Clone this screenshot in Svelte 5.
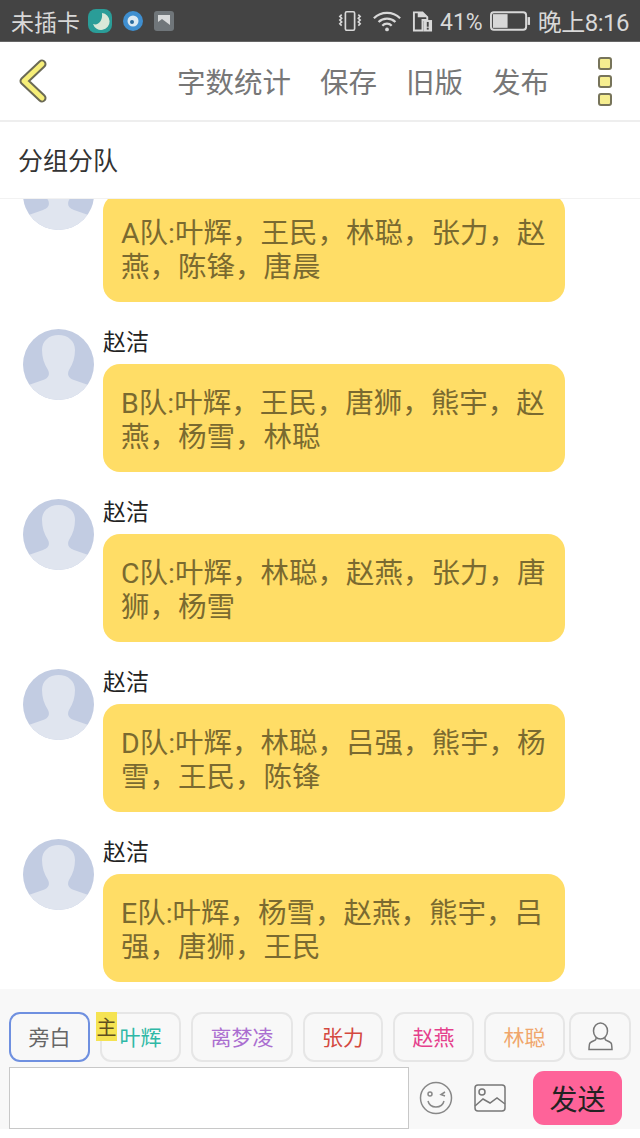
<script>
  const messages = [
    '叶辉，王民，林聪，张力，赵燕，陈锋，唐晨',
    '叶辉，王民，唐狮，熊宇，赵燕，杨雪，林聪',
    '叶辉，林聪，赵燕，张力，唐狮，杨雪',
    '叶辉，林聪，吕强，熊宇，杨雪，王民，陈锋',
    '叶辉，杨雪，赵燕，熊宇，吕强，唐狮，王民'
  ].map((t, i) => 'ABCDE'[i] + '队:' + t);
  const roles = [
    { name: '叶辉', color: '#2fb8a6', w: 81, main: true },
    { name: '离梦凌', color: '#ab6fd0', w: 102 },
    { name: '张力', color: '#d4493f', w: 80 },
    { name: '赵燕', color: '#e5408c', w: 81 },
    { name: '林聪', color: '#f0a66c', w: 81 }
  ];
</script>

<div class="page">
  <header class="status">
    <div class="st-left">
      <span>未插卡</span>
      <svg class="ico" width="24" height="24" viewBox="0 0 24 24"><rect width="24" height="24" rx="8" fill="#2a9d98"/><path d="M14 4a8.500 8.500 0 1 1-9 11c5 2 10-3 9-11z" fill="#d8e8d8"/></svg>
      <svg class="ico" width="22" height="22" viewBox="0 0 22 22"><circle cx="11" cy="11" r="10" fill="#3f8fd0"/><circle cx="11" cy="11" r="5.500" fill="#dbe9f2"/><circle cx="10" cy="12" r="2" fill="#2a6a9c"/></svg>
      <svg class="ico" width="20" height="20" viewBox="0 0 20 20"><rect width="20" height="20" rx="3" fill="#70767a"/><rect x="4" y="4" width="12" height="11" fill="#d8dadb"/><path d="M4 11l4-3 8 6v1H4z" fill="#70767a"/></svg>
    </div>
    <div class="st-right">
      <svg class="vib" width="24" height="24" viewBox="0 0 26 24" fill="none" stroke="#d8d8d8" stroke-width="1.800"><rect x="8" y="2" width="10" height="20" rx="1.500"/><path d="M4 5l-2 2 2 2-2 2 2 2-2 2 2 2M22 5l2 2-2 2 2 2-2 2 2 2-2 2"/></svg>
      <svg class="wifi" width="30" height="24" viewBox="0 0 32 24" fill="none" stroke="#d8d8d8" stroke-width="2.400"><path d="M2 9a20 20 0 0 1 28 0M7 13a13 13 0 0 1 18 0M11 17a7 7 0 0 1 10 0"/><circle cx="16" cy="21" r="2" fill="#d8d8d8" stroke="none"/></svg>
      <svg class="sim" width="21" height="24" viewBox="0 0 22 24"><path d="M2 3h9l5 5v3h-5v11H2z" fill="none" stroke="#d8d8d8" stroke-width="2"/><path d="M6 3h5l5 5H6z" fill="#d8d8d8"/><rect x="12" y="11" width="9" height="12" fill="#d8d8d8"/><rect x="15.500" y="13" width="2" height="5" fill="#444"/><rect x="15.500" y="19" width="2" height="2" fill="#444"/></svg>
      <span class="pct">41%</span>
      <svg class="batt" width="41" height="24" viewBox="0 0 42 24"><rect x="1" y="3" width="36" height="18" rx="3" fill="none" stroke="#d8d8d8" stroke-width="2"/><rect x="3" y="5" width="15" height="14" fill="#d8d8d8"/><rect x="38.500" y="8" width="2.500" height="8" fill="#d8d8d8"/></svg>
      <span class="time">晚上8:16</span>
    </div>
  </header>

  <nav class="toolbar">
    <svg class="back" width="32" height="46" viewBox="0 0 32 46"><path d="M25 6L7 23l18 17" fill="none" stroke="#6b6a55" stroke-width="9" stroke-linecap="round" stroke-linejoin="round"/><path d="M25 6L7 23l18 17" fill="none" stroke="#f6ee78" stroke-width="5" stroke-linecap="round" stroke-linejoin="round"/></svg>
    <div class="actions">
      <span>字数统计</span><span>保存</span><span>旧版</span><span>发布</span>
    </div>
    <div class="dots"><i></i><i></i><i></i></div>
  </nav>

  <div class="title">分组分队</div>

  <main class="chat">
    <div class="list">
      {#each messages as text, i}
        <article class="msg">
          <svg class="avatar" viewBox="0 0 71 71">
            <defs><clipPath id="ac"><circle cx="35.500" cy="35.500" r="35.500"/></clipPath></defs>
            <g clip-path="url(#ac)">
              <rect width="71" height="71" fill="#c2cce2"/>
              <path d="M0 71V58l20-7c6-2 7-6 5-10-4-6-6-13-6-20 0-9 7-15 16.500-15S52 12 52 21c0 7-2 14-6 20-2 4-1 8 5 10l20 7v13z" fill="#e0e5ef"/>
            </g>
          </svg>
          <div class="body">
            <div class="name">{i ? '赵洁' : ''}</div>
            <div class="bubble">{text}</div>
          </div>
        </article>
      {/each}
    </div>
  </main>

  <footer class="composer">
    <div class="roles">
      <button class="role narrator">旁白</button>
      {#each roles as r}
        <button class="role" style="color:{r.color};width:{r.w}px">
          {#if r.main}<span class="main-tag">主</span>{/if}{r.name}
        </button>
      {/each}
      <button class="role user" aria-label="用户">
        <svg width="25" height="29" viewBox="0 0 25 29" fill="none" stroke="#777" stroke-width="1.500"><ellipse cx="12.500" cy="9" rx="7" ry="8"/><path d="M8 15.500v1.500c0 2-6 2-6.500 5-.3 2-.5 4-.5 5.500h23c0-1.500-.2-3.500-.5-5.500-.5-3-6.500-3-6.500-5v-1.500"/></svg>
      </button>
    </div>
    <div class="input-row">
      <div class="input"></div>
      <svg class="smile" width="34" height="34" viewBox="0 0 34 34" fill="none" stroke="#888" stroke-width="1.500"><circle cx="17" cy="17" r="15.500"/><circle cx="11" cy="13" r="2"/><path d="M26 11l-4 2.500 4 1.500M9 20c2 8 14 8 16 0"/></svg>
      <svg class="pic" width="32" height="28" viewBox="0 0 32 28" fill="none" stroke="#777" stroke-width="1.500"><rect x="1" y="1" width="30" height="26" rx="3"/><circle cx="8" cy="8" r="3"/><path d="M1 22l8-7 7 4 7-5 8 6"/></svg>
      <button class="send">发送</button>
    </div>
  </footer>
</div>

<style>
  :global(body) { margin: 0; background: #fff; }
  .page {
    width: 640px; height: 1138px; overflow: hidden; display: flex; flex-direction: column;
    font-family: "Noto Sans CJK SC", "Roboto", sans-serif; background: #fff;
  }
  .status {
    height: 42px; box-sizing: border-box; flex: none; background: #444; border-bottom: 1px solid #666;
    display: flex; justify-content: space-between; align-items: center; padding: 0 11px; color: #d8d8d8; font-size: 23px;
  }
  .st-left, .st-right { display: flex; align-items: center; }
  .st-left .ico { margin-left: 10px; }
  .st-left .ico:first-of-type { margin-left: 8px; }
  .vib { margin-right: 10px; }
  .wifi { margin-right: 10px; }
  .sim { margin-right: 7px; }
  .batt { margin-right: 7px; }
  .pct { font-family: Roboto, sans-serif; font-size: 23px; margin-right: 7px; padding-top: 3px; }
  .time { font-size: 24px; letter-spacing: -0.5px; font-family: Roboto, "Noto Sans CJK SC", sans-serif; }

  .toolbar {
    height: 80px; flex: none; box-sizing: border-box; border-bottom: 2px solid #eee;
    display: flex; align-items: center; padding-left: 17px;
  }
  .back { flex: none; }
  .actions { margin-left: 128px; display: flex; gap: 29px; color: #777; font-size: 28.500px; line-height: 1; }
  .dots { margin-left: 48.500px; display: flex; flex-direction: column; gap: 5px; }
  .dots i { display: block; width: 14px; height: 13px; box-sizing: border-box; border: 2px solid #77745a; border-radius: 3px; background: #f6ee90; }

  .title {
    height: 77px; flex: none; box-sizing: border-box; border-bottom: 1px solid #f2f2f2;
    padding-left: 18px; font-size: 25px; line-height: 75px; color: #333;
  }

  .chat { height: 790px; flex: none; overflow: hidden; }
  .list { margin-top: -50px; }
  .msg { display: flex; height: 170px; padding-left: 23px; }
  .avatar { width: 71px; height: 71px; flex: none; margin-top: 10px; }
  .body { margin-left: 9px; width: 462px; }
  .name { font-size: 23px; line-height: 30px; height: 39px; margin-top: 6px; color: #222; }
  .bubble {
    box-sizing: border-box; height: 108px; background: #ffdd66; border-radius: 17px;
    padding: 23px 18px 0; font-size: 28.500px; line-height: 34px; color: #7a6a30;
    font-family: Roboto, "Noto Sans CJK SC", sans-serif;
  }

  .composer { height: 140px; flex: none; background: #f8f8f8; box-sizing: border-box; padding: 23px 9px 0; }
  .roles { display: flex; gap: 10px; align-items: flex-start; }
  .role {
    position: relative; height: 50px; box-sizing: border-box; border: 2px solid #e6e6e6; border-radius: 11px;
    background: #f8f8f8; font: inherit; font-size: 21px; line-height: 1; padding: 0 0 2px; flex: none; display: flex; align-items: center; justify-content: center;
  }
  .narrator { width: 81px; border-color: #6f90e0; color: #666; }
  .main-tag {
    position: absolute; left: -6px; top: -2px; width: 21px; height: 29px; background: #f5e352; color: #5f5020;
    font-size: 20px; line-height: 30px; text-align: center;
  }
  .user { width: 62px; height: 48px; margin-left: -6px; padding: 0; }
  .input-row { display: flex; align-items: center; margin-top: 5px; }
  .input { width: 400px; height: 62px; box-sizing: border-box; background: #fff; border: 1px solid #c8c8c8; flex: none; }
  .smile { margin-left: 10px; flex: none; }
  .pic { margin-left: 21px; flex: none; }
  .send {
    margin-left: 27px; width: 89px; height: 54px; border: 0; border-radius: 11px; background: #fe6399; color: #222;
    font: inherit; font-size: 28px; line-height: 1; padding: 0; flex: none;
  }
</style>
